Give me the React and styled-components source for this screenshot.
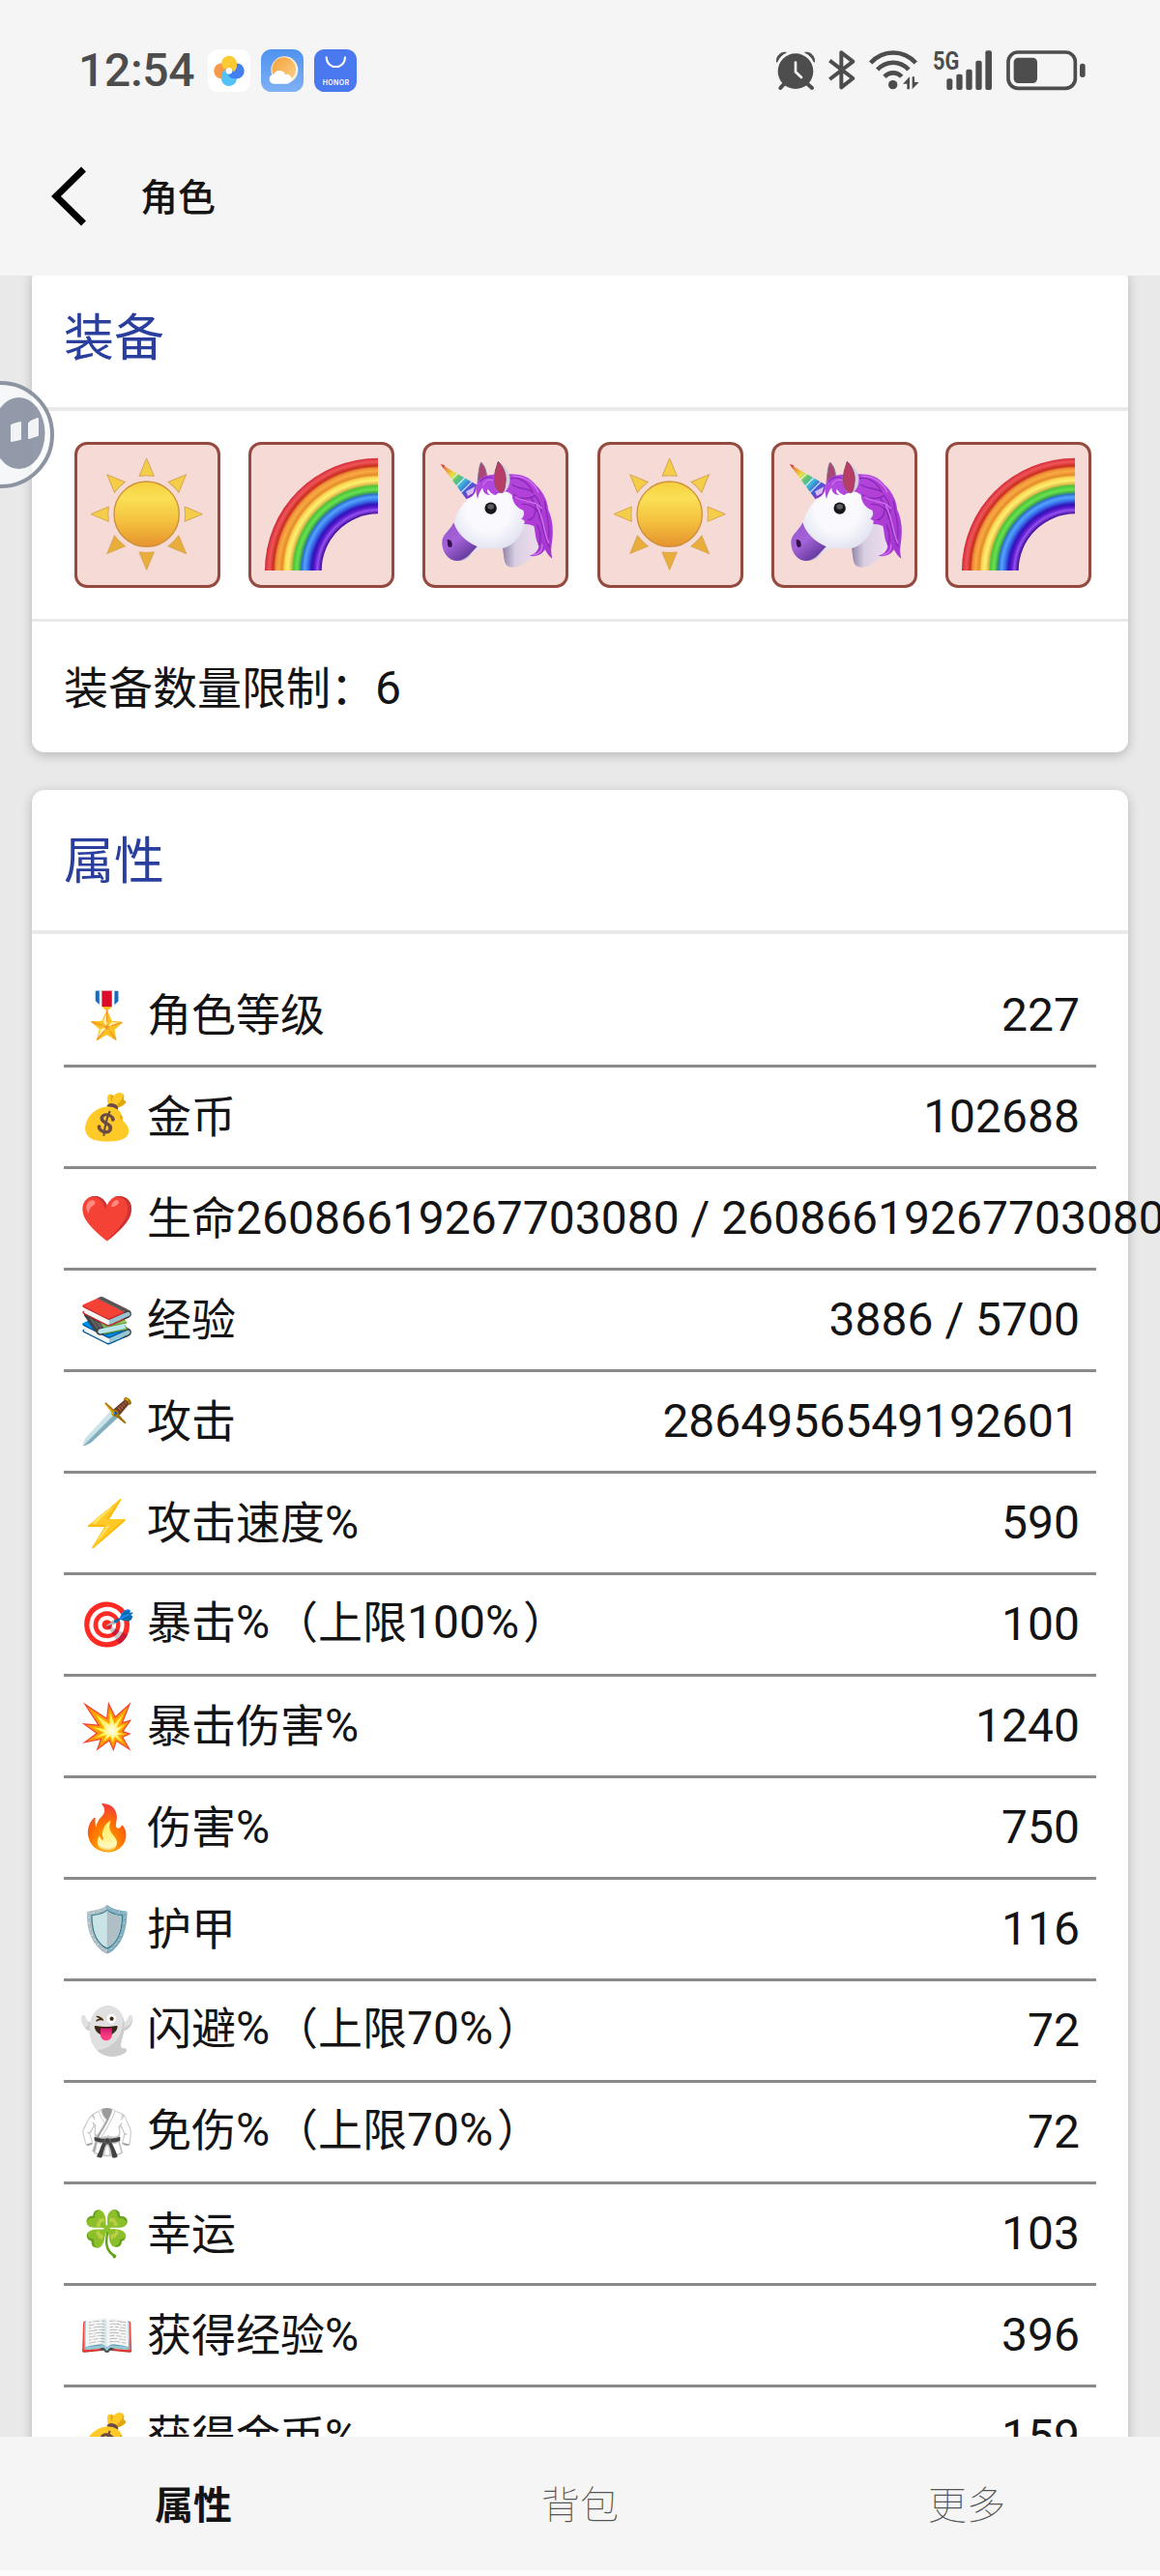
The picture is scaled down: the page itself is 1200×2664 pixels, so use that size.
import React from 'react';
import styled, { createGlobalStyle } from 'styled-components';

const GlobalStyle = createGlobalStyle`
  * {
    box-sizing: border-box;
  }

  body {
    margin: 0;
    background: #f5f5f5;
    font-family: 'Noto Sans CJK SC', sans-serif;
    color: #141414;
  }

  svg {
    display: block;
    overflow: visible;
  }
`;

const Screen = styled.div`
  display: flex;
  flex-direction: column;
  width: 1200px;
  height: 2664px;
  overflow: hidden;
  background: #f5f5f5;
`;

const StatusBar = styled.div`
  display: flex;
  align-items: center;
  justify-content: space-between;
  height: 145px;
  padding: 0 77px 0 81px;
`;

const StatusGroup = styled.div`
  display: flex;
  align-items: center;
  gap: ${({ gap }) => gap}px;
`;

const Clock = styled.span`
  width: 123px;
  font-family: Roboto, sans-serif;
  font-size: 48px;
  font-weight: 500;
  line-height: 56px;
  letter-spacing: -0.3px;
  color: #4d4d4d;
`;

const NavBar = styled.div`
  display: flex;
  align-items: center;
  height: 140px;
  padding: 0 0 24px 54px;
`;

const NavTitle = styled.h1`
  margin: 0 0 0 55px;
  padding-bottom: 4px;
  font-size: 39px;
  font-weight: 500;
  line-height: 58px;
`;

const Content = styled.div`
  position: relative;
  flex: 1;
  min-height: 0;
  overflow: hidden;
  padding: 0 33px;
  background: #e9e9e9;
`;

const Card = styled.div`
  margin-bottom: 39px;
  border-radius: 13px;
  background: #fff;
  box-shadow: 0 3px 12px rgba(0, 0, 0, 0.22);

  &:first-child {
    margin-top: -9px;
  }
`;

const CardHeader = styled.div`
  height: 149px;
  padding: 0 33px;
  border-bottom: 4px solid #e9e9e9;
  font-size: 52px;
  line-height: 139px;
  color: #2a3f9d;
`;

const CardFooter = styled.div`
  height: 135px;
  padding: 0 33px;
  font-size: 46px;
  line-height: 130px;
`;

const Equipment = styled.div`
  display: flex;
  justify-content: space-between;
  padding: 32px 38px 32px 44px;
  border-bottom: 3px solid #e9e9e9;
`;

const Tile = styled.div`
  width: 151px;
  height: 151px;
  border: 3px solid #954a40;
  border-radius: 13px;
  background: #f5dad6;
`;

const Stats = styled.div`
  padding: 33px 33px 0;
`;

const Row = styled.div`
  display: flex;
  align-items: center;
  height: 105px;
  padding: 0 17px 0 16px;
  border-bottom: 3px solid #8a8a8a;
`;

const Emoji = styled.span`
  flex: none;
  width: 57px;
  margin-right: 13px;
  font-family: 'Noto Color Emoji', sans-serif;
  font-size: 46px;
  line-height: 60px;
`;

const RowLabel = styled.span`
  flex: none;
  font-size: 46px;
  line-height: 60px;
  white-space: nowrap;
  padding-bottom: 8px;
`;

const RowValue = styled.span`
  flex: none;
  margin-left: auto;
  font-family: Roboto, sans-serif;
  font-size: 48px;
  line-height: 60px;
  white-space: nowrap;
`;

const Digits = styled.span`
  font-family: Roboto, sans-serif;
  font-size: 48px;
`;

const Percent = styled(Digits)`
  display: inline-block;
  width: 39px;
  line-height: 1;
`;

const FloatingBall = styled.div`
  position: absolute;
  left: -55px;
  top: 109px;
  width: 111px;
  height: 111px;
`;

const TabBar = styled.div`
  display: flex;
  height: 144px;
  border-bottom: 6px solid #fcfcfc;
`;

const Tab = styled.div`
  flex: 1;
  font-size: 40px;
  font-weight: ${({ active }) => (active ? 700 : 100)};
  line-height: 136px;
  text-align: center;
  color: ${({ active }) => (active ? '#141414' : '#555')};
`;

const petals = [
  { angle: 270, color: '#f7994b' },
  { angle: 180, color: '#54c1f7' },
  { angle: 90, color: '#437ff0' },
  { angle: 0, color: '#fccb33' }
];

const PetalsIcon = () => (
  <svg width="44" height="44" viewBox="643 60 132 132">
    <rect x="643" y="60" width="132" height="132" rx="32" fill="#fff" />
    {petals.map(({ angle, color }) => (
      <path
        key={angle}
        d="M686 106C683 91 696 80 710 80C726 81 735 94 733 110C733 120 728 127 720 130C722 118 708 113 699 120C692 122 688 116 686 106Z"
        transform={`rotate(${angle} 709 127)`}
        fill={color}
      />
    ))}
    <circle cx="709" cy="127" r="8" fill="#fff" />
  </svg>
);

const WeatherIcon = () => (
  <svg width="44" height="44" viewBox="807 60 132 132">
    <defs>
      <linearGradient id="sky" x1="0" y1="0" x2="0" y2="1">
        <stop offset="0" stopColor="#4f92ee" />
        <stop offset="1" stopColor="#7fb2f5" />
      </linearGradient>
      <linearGradient id="glow" x1="0" y1="0" x2="1" y2="1">
        <stop offset="0" stopColor="#f6a03a" />
        <stop offset="1" stopColor="#fad08a" />
      </linearGradient>
    </defs>
    <rect x="807" y="60" width="132" height="132" rx="32" fill="url(#sky)" />
    <circle cx="880" cy="124" r="42" fill="#fdf1dc" />
    <circle cx="878" cy="122" r="37" fill="url(#glow)" />
    <path d="M849 167a15 15 0 0 1-2-30a19 19 0 0 1 35 1a15 15 0 1 1 4 29z" fill="#fff" />
  </svg>
);

const HonorIcon = () => (
  <svg width="44" height="44" viewBox="972 60 132 132">
    <rect x="972" y="60" width="132" height="132" rx="32" fill="#4a78ee" />
    <path d="M1010 85C1012 124 1066 124 1068 85" fill="none" stroke="#fff" strokeWidth="6" strokeLinecap="round" />
    <text x="998" y="172" fontFamily="Inter, sans-serif" fontSize="21" fontWeight="600" textLength="82" fill="#fff">HONOR</text>
  </svg>
);

const AlarmIcon = () => (
  <svg width="40" height="41" viewBox="70 66 120 123" fill="#4d4d4d">
    <circle cx="130" cy="131" r="55" />
    <path d="M72 103C69 84 84 70 101 73C89 78 79 88 72 103ZM188 103C191 84 176 70 159 73C171 78 181 88 188 103Z" stroke="#4d4d4d" strokeWidth="3" strokeLinejoin="round" />
    <path d="M98 166L83 183M162 166L181 183" stroke="#4d4d4d" strokeWidth="12" strokeLinecap="round" />
    <path d="M130 104V133L148 150" fill="none" stroke="#f5f5f5" strokeWidth="8" strokeLinecap="round" />
  </svg>
);

const BluetoothIcon = () => (
  <svg width="28" height="41" viewBox="236 65 84 123">
    <path d="M240 97L312 152L276 180V72L312 100L240 155" fill="none" stroke="#4d4d4d" strokeWidth="12" strokeLinejoin="round" />
  </svg>
);

const WifiIcon = () => (
  <svg width="52" height="41" viewBox="362 65 156 123" fill="none" stroke="#4d4d4d">
    <path d="M367 104C406 62 468 62 507 104M388 125C416 96 458 96 485 125" strokeWidth="14" />
    <path d="M410 147C425 131 449 131 463 147" strokeWidth="14" />
    <circle cx="436" cy="172" r="14" fill="#4d4d4d" stroke="none" />
    <path d="M488 147V186H480V169H467ZM496 186V147H503V164H517Z" fill="#4d4d4d" stroke="none" />
  </svg>
);

const SignalIcon = () => (
  <svg width="62" height="42" viewBox="551 65 186 126" fill="#4d4d4d">
    <text x="551" y="126" fontFamily="Roboto, sans-serif" fontSize="80" fontWeight="700" textLength="82" lengthAdjust="spacingAndGlyphs">5G</text>
    <rect x="594" y="153" width="18" height="35" rx="6" />
    <rect x="624" y="139" width="19" height="49" rx="6" />
    <rect x="654" y="124" width="19" height="64" rx="6" />
    <rect x="684" y="97" width="19" height="91" rx="6" />
    <rect x="714" y="66" width="20" height="122" rx="6" />
  </svg>
);

const BatteryIcon = () => (
  <svg width="82" height="41" viewBox="783 65 246 123" fill="#4d4d4d">
    <rect x="789" y="71" width="208" height="112" rx="30" fill="none" stroke="#4d4d4d" strokeWidth="11" />
    <rect x="806" y="88" width="73" height="79" rx="14" />
    <rect x="1011" y="106" width="17" height="43" rx="8" />
  </svg>
);

const BackIcon = () => (
  <svg width="36" height="62" viewBox="0 0 36 62">
    <path d="M32.500 3L4 31L32.500 59" fill="none" stroke="#000" strokeWidth="7" />
  </svg>
);

const BallIcon = () => (
  <svg width="111" height="111" viewBox="0 0 111 111">
    <circle cx="55.500" cy="55.500" r="53.500" fill="#fafbfc" fillOpacity="0.75" stroke="#8d94a1" strokeWidth="4" />
    <ellipse cx="74.500" cy="54" rx="27" ry="37" fill="#6f788c" fillOpacity="0.74" />
    <path d="M69 45L76 43V60L67 62V46ZM87 42L94 39V56L85 59V44Z" fill="#f2f3f5" stroke="#f2f3f5" strokeWidth="2" strokeLinejoin="round" />
  </svg>
);

const rays = [0, 45, 90, 135, 180, 225, 270, 315];

const SunIcon = () => (
  <svg width="145" height="145" viewBox="600 60 435 435">
    <defs>
      <linearGradient id="disc" x1="0" y1="0" x2="0" y2="1">
        <stop offset="0" stopColor="#f6cf3d" />
        <stop offset="0.250" stopColor="#fae056" />
        <stop offset="0.600" stopColor="#f4c23e" />
        <stop offset="1" stopColor="#e6932e" />
      </linearGradient>
    </defs>
    {rays.map(angle => (
      <path
        key={angle}
        d="M815 102L838 157Q815 154 792 157Z"
        transform={`rotate(${angle} 815 275)`}
        fill={angle > 90 && angle < 270 ? '#e9ae3a' : '#f4ce48'}
        stroke="#d9a552"
        strokeWidth="3"
      />
    ))}
    <circle cx="815" cy="275" r="101" fill="url(#disc)" stroke="#cf8f3c" strokeWidth="4" />
  </svg>
);

const RainbowIcon = () => (
  <svg width="145" height="145" viewBox="123 60 435 435">
    <defs>
      <radialGradient id="bow" gradientUnits="userSpaceOnUse" cx="516" cy="450" r="351">
        <stop offset="0.500" stopColor="#3c0a96" />
        <stop offset="0.535" stopColor="#9550ee" />
        <stop offset="0.560" stopColor="#5a1bd0" />
        <stop offset="0.585" stopColor="#3012b8" />
        <stop offset="0.625" stopColor="#3a7df2" />
        <stop offset="0.650" stopColor="#55a2fa" />
        <stop offset="0.675" stopColor="#2d6fd8" />
        <stop offset="0.685" stopColor="#3a9b56" />
        <stop offset="0.715" stopColor="#66e34b" />
        <stop offset="0.750" stopColor="#52c23c" />
        <stop offset="0.765" stopColor="#e0b84a" />
        <stop offset="0.795" stopColor="#fdf071" />
        <stop offset="0.825" stopColor="#f9d652" />
        <stop offset="0.845" stopColor="#e58a2b" />
        <stop offset="0.880" stopColor="#f8ab42" />
        <stop offset="0.905" stopColor="#ee8c35" />
        <stop offset="0.925" stopColor="#c92c1f" />
        <stop offset="0.960" stopColor="#ef5558" />
        <stop offset="1" stopColor="#d02838" />
      </radialGradient>
    </defs>
    <path d="M165 450A351 349 0 0 1 516 101V274A176 176 0 0 0 341 450Z" fill="url(#bow)" />
  </svg>
);

const UnicornIcon = () => (
  <svg width="145" height="145" viewBox="60 60 435 435">
    <defs>
      <linearGradient id="horn" gradientUnits="userSpaceOnUse" x1="108" y1="121" x2="208" y2="212">
        <stop offset="0" stopColor="#d9483c" />
        <stop offset="0.220" stopColor="#f0a93c" />
        <stop offset="0.360" stopColor="#e6e04a" />
        <stop offset="0.500" stopColor="#5cc470" />
        <stop offset="0.660" stopColor="#3fb4dc" />
        <stop offset="0.800" stopColor="#3b62d4" />
        <stop offset="1" stopColor="#8d2fc8" />
      </linearGradient>
      <radialGradient id="face" gradientUnits="userSpaceOnUse" cx="255" cy="260" r="190">
        <stop offset="0.350" stopColor="#fafafe" />
        <stop offset="0.750" stopColor="#dcdeed" />
        <stop offset="1" stopColor="#9a90b4" />
      </radialGradient>
      <linearGradient id="neck" x1="0" y1="0" x2="1" y2="0">
        <stop offset="0" stopColor="#8c80a4" />
        <stop offset="0.350" stopColor="#d9cfe2" />
        <stop offset="1" stopColor="#eedeee" />
      </linearGradient>
      <linearGradient id="muzzle" x1="0" y1="0" x2="0.700" y2="1">
        <stop offset="0" stopColor="#9a52cc" />
        <stop offset="0.500" stopColor="#a463d8" />
        <stop offset="1" stopColor="#5d3596" />
      </linearGradient>
      <linearGradient id="mane" x1="0" y1="0" x2="1" y2="1">
        <stop offset="0" stopColor="#b14be0" />
        <stop offset="0.500" stopColor="#b23fd8" />
        <stop offset="1" stopColor="#a236cf" />
      </linearGradient>
    </defs>
    <path d="M298 370C304 397 302 419 311 432C322 445 348 442 366 427C382 414 400 405 414 385L410 285L350 270Z" fill="url(#neck)" />
    <path d="M222 178C225 150 226 128 233 114C244 125 252 142 250 166Z" fill="#a94673" stroke="#847f98" strokeWidth="3" />
    <path d="M112 360C113 335 135 324 148 301C160 268 174 239 205 219L245 180L330 190C366 220 378 278 364 320C354 346 330 376 296 382C270 384 242 376 222 386C202 396 196 419 160 420C130 420 111 387 112 360Z" fill="url(#face)" />
    <path d="M148 301C160 338 188 362 221 376C208 387 190 418 160 420C130 420 109 390 113 355C119 334 137 325 148 301Z" fill="url(#muzzle)" />
    <path d="M128 354C139 352 145 363 143 374C136 382 129 376 129 368Z" fill="#34104f" />
    <path d="M107 120L219 184Q219 220 187 228Z" fill="url(#horn)" />
    <path d="M109 120L121 124L116 133Z" fill="#d14938" />
    <path d="M140 168L160 150M156 189L182 163M171 208L204 175" fill="none" stroke="#fff" strokeWidth="4" strokeOpacity="0.700" />
    <path d="M186 205L214 190L208 210L192 219Z" fill="#f0dcff" fillOpacity="0.800" />
    <path d="M222 229C211 189 220 158 259 154C284 149 307 158 320 151C352 150 384 158 404 186C427 207 440 238 441 260C456 292 458 326 453 362C450 382 449 391 454 413C444 407 437 395 431 385C423 401 403 409 382 404C399 400 412 388 412 371C400 353 402 328 397 312C387 308 377 305 366 306C371 297 368 294 358 290C367 282 368 272 364 263C345 257 330 238 329 215C313 203 307 203 299 210C291 207 280 211 279 216C266 214 260 206 254 197C251 202 251 211 263 216C246 216 238 206 238 193C229 203 225 216 222 229Z" fill="url(#mane)" />
    <path d="M325 165C350 157 380 176 393 207C370 190 350 200 330 184M335 215C350 230 382 230 401 217C420 241 424 270 414 287C411 259 388 243 361 244M389 226C425 274 420 337 445 377M379 293C394 292 402 278 401 257M430 235C438 289 450 320 440 359M230 174C238 160 257 158 267 162M412 371C422 351 417 329 408 310" fill="none" stroke="#8829b7" strokeWidth="4" strokeLinecap="round" />
    <path d="M335 157C370 158 398 178 410 207M340 222C374 242 401 232 421 257M406 250C429 290 426 330 443 364M240 184C247 168 260 166 270 170M396 402C412 400 425 387 422 370" fill="none" stroke="#cf72ee" strokeWidth="4" strokeLinecap="round" />
    <path d="M286 112C307 123 326 149 322 174C320 195 309 205 298 211C273 203 270 174 277 141Z" fill="#d5cedf" />
    <path d="M286 112C304 129 314 157 308 182C306 200 303 207 296 209C274 200 271 174 277 141Z" fill="#b73c66" stroke="#8f4765" strokeWidth="3" />
    <circle cx="263" cy="257" r="18.500" fill="#171719" />
    <ellipse cx="263" cy="252" rx="10" ry="8" fill="#5d5d61" />
  </svg>
);

const icons = {
  sun: SunIcon,
  rainbow: RainbowIcon,
  unicorn: UnicornIcon
};

const equipment = ['sun', 'rainbow', 'unicorn', 'sun', 'unicorn', 'rainbow'];

const stats = [
  { emoji: '🎖️', label: '角色等级', value: '227' },
  { emoji: '💰', label: '金币', value: '102688' },
  { emoji: '❤️', label: '生命', value: '26086619267703080 / 26086619267703080' },
  { emoji: '📚', label: '经验', value: '3886 / 5700' },
  { emoji: '🗡️', label: '攻击', value: '2864956549192601' },
  { emoji: '⚡', label: '攻击速度%', value: '590' },
  { emoji: '🎯', label: '暴击%（上限100%）', value: '100' },
  { emoji: '💥', label: '暴击伤害%', value: '1240' },
  { emoji: '🔥', label: '伤害%', value: '750' },
  { emoji: '🛡️', label: '护甲', value: '116' },
  { emoji: '👻', label: '闪避%（上限70%）', value: '72' },
  { emoji: '🥋', label: '免伤%（上限70%）', value: '72' },
  { emoji: '🍀', label: '幸运', value: '103' },
  { emoji: '📖', label: '获得经验%', value: '396' },
  { emoji: '💰', label: '获得金币%', value: '159' }
];

// digits and percent signs inside a label use their own widths
const renderLabel = text =>
  text.split(/(\d+|%)/).map((part, i) => {
    if (part === '%') return <Percent key={i}>%</Percent>;
    if (/^\d/.test(part)) return <Digits key={i}>{part}</Digits>;
    return part;
  });

const StatRow = ({ emoji, label, value }) => (
  <Row>
    <Emoji>{emoji}</Emoji>
    <RowLabel>{renderLabel(label)}</RowLabel>
    <RowValue>{value}</RowValue>
  </Row>
);

export default () => (
  <Screen lang="zh-CN">
    <GlobalStyle />
    <StatusBar>
      <StatusGroup gap={11}>
        <Clock>12:54</Clock>
        <PetalsIcon />
        <WeatherIcon />
        <HonorIcon />
      </StatusGroup>
      <StatusGroup gap={14}>
        <AlarmIcon />
        <BluetoothIcon />
        <WifiIcon />
        <SignalIcon />
        <BatteryIcon />
      </StatusGroup>
    </StatusBar>
    <NavBar>
      <BackIcon />
      <NavTitle>角色</NavTitle>
    </NavBar>
    <Content>
      <Card>
        <CardHeader>装备</CardHeader>
        <Equipment>
          {equipment.map((name, i) => {
            const Icon = icons[name];
            return (
              <Tile key={i}>
                <Icon />
              </Tile>
            );
          })}
        </Equipment>
        <CardFooter>
          装备数量限制：<Digits>6</Digits>
        </CardFooter>
      </Card>
      <Card>
        <CardHeader>属性</CardHeader>
        <Stats>
          {stats.map(stat => (
            <StatRow key={stat.label} {...stat} />
          ))}
        </Stats>
      </Card>
      <FloatingBall>
        <BallIcon />
      </FloatingBall>
    </Content>
    <TabBar>
      <Tab active>属性</Tab>
      <Tab>背包</Tab>
      <Tab>更多</Tab>
    </TabBar>
  </Screen>
);
